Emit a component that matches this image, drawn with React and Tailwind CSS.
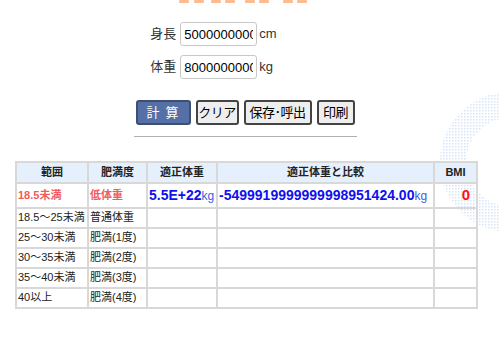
import React from 'react';

const rows = [
  ['18.5～25未満', '普通体重'],
  ['25～30未満', '肥満(1度)'],
  ['30～35未満', '肥満(2度)'],
  ['35～40未満', '肥満(3度)'],
  ['40以上', '肥満(4度)'],
];

const font = { fontFamily: '"Liberation Sans", "Noto Sans CJK JP", sans-serif' };

const Field = ({ label, value, unit }) => (
  <div className="flex items-center h-[24px]">
    <span className="w-[30px] text-[13px] text-[#333]">{label}</span>
    <input
      readOnly
      value={value}
      className="w-[77px] h-[24px] border border-[#c8c8c8] rounded-[3px] px-[3px] text-[13px] text-black outline-none"
    />
    <span className="ml-[2px] text-[13px] text-[#333]">{unit}</span>
  </div>
);

const Btn = ({ children, primary, w }) => (
  <button
    className={`${w} h-[25px] px-0 rounded-[3px] border-2 text-[13px] leading-none whitespace-nowrap tracking-[-0.5px] ${
      primary
        ? 'bg-[#5570a6] border-[#3f4f70] text-white'
        : 'bg-[#eeeeee] border-[#444] text-black'
    }`}
  >
    {children}
  </button>
);

const cell = 'border-2 border-[#d8d8d8]';

export default function App() {
  return (
    <div className="relative w-[500px] h-[339px] bg-white overflow-hidden" style={font}>
      {/* dotted ring decoration */}
      <svg className="absolute left-[440px] top-[92px]" width="140" height="140">
        <defs>
          <pattern id="dots" width="3" height="3" patternUnits="userSpaceOnUse">
            <rect width="1.5" height="1.5" fill="#d6e4f6" />
          </pattern>
        </defs>
        <circle cx="70" cy="70" r="57" fill="none" stroke="url(#dots)" strokeWidth="26" />
      </svg>

      {/* cut off heading */}
      <svg className="absolute left-[179px] top-0" width="130" height="4">
        {[0, 15, 32, 46, 66, 80, 104, 118].map((x) => (
          <rect key={x} x={x} y="0" width="10" height="3" rx="1" fill="#fdbb8e" />
        ))}
      </svg>

      <div className="relative flex flex-col items-center">
        <div className="flex flex-col gap-[9px] mt-[22px] mr-[73px]">
          <Field label="身長" value="500000000000" unit="cm" />
          <Field label="体重" value="800000000000" unit="kg" />
        </div>

        <div className="flex gap-[5px] mt-[21px] mr-[10px]">
          <Btn primary w="w-[55px] tracking-[6px] pl-[5px]">計算</Btn>
          <Btn w="w-[43px]">クリア</Btn>
          <Btn w="w-[68px]">保存･呼出</Btn>
          <Btn w="w-[38px]">印刷</Btn>
        </div>
        <div className="w-[223px] h-px bg-[#b0b0b0] mt-[11px] mr-[10px]" />
      </div>

      <table className="absolute left-[15px] top-[161px] w-[463px] table-fixed border-collapse text-[11px] text-[#222]">
        <thead>
          <tr className="bg-[#e5f0fc] h-[21px]">
            <th className={`w-[72px] ${cell} font-bold`}>範囲</th>
            <th className={`w-[59px] ${cell} font-bold`}>肥満度</th>
            <th className={`w-[70px] ${cell} font-bold`}>適正体重</th>
            <th className={`${cell} font-bold`}>適正体重と比較</th>
            <th className={`w-[43px] ${cell} font-bold`}>BMI</th>
          </tr>
        </thead>
        <tbody>
          <tr className="h-[20px]">
            <td className={`${cell} px-[1px] text-[#f25c5c] font-bold whitespace-nowrap`}>18.5未満</td>
            <td className={`${cell} px-[1px] text-[#f25c5c] font-bold`}>低体重</td>
            <td className={`${cell} px-[1px] text-[#1010ee] font-bold text-[14px] whitespace-nowrap`}>
              5.5E+22<span className="font-normal text-[12px] text-[#4060e0]">kg</span>
            </td>
            <td className={`${cell} px-[1px] text-[#1010ee] font-bold text-[14px] whitespace-nowrap`}>
              -5499919999999998951424.00<span className="font-normal text-[12px] text-[#4060e0]">kg</span>
            </td>
            <td className={`${cell} pr-[6px] text-right text-[#ff1010] font-bold text-[15px]`}>0</td>
          </tr>
          {rows.map(([a, b]) => (
            <tr key={a} className="h-[20px]">
              <td className={`${cell} px-[1px] whitespace-nowrap`}>{a}</td>
              <td className={`${cell} px-[1px] whitespace-nowrap`}>{b}</td>
              <td className={cell} />
              <td className={cell} />
              <td className={cell} />
            </tr>
          ))}
        </tbody>
      </table>
    </div>
  );
}
